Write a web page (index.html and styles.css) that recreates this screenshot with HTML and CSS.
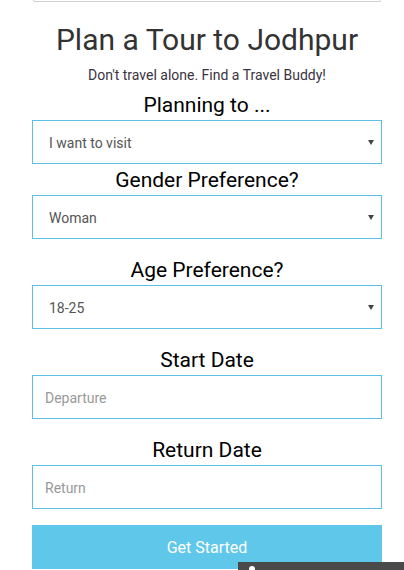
FILE: index.html
```html
<!DOCTYPE html>
<html lang="en">
<head>
<meta charset="utf-8">
<title>Plan a Tour to Jodhpur</title>
<link rel="stylesheet" href="styles.css">
</head>
<body>
<div class="page">
  <div class="prev-card"></div>
  <h1 class="title">Plan a Tour to Jodhpur</h1>
  <p class="subtitle">Don't travel alone. Find a Travel Buddy!</p>
  <form class="form">
    <label class="label">Planning to ...</label>
    <select class="field select field-first">
      <option>I want to visit</option>
    </select>
    <label class="label">Gender Preference?</label>
    <select class="field select">
      <option>Woman</option>
    </select>
    <label class="label">Age Preference?</label>
    <select class="field select">
      <option>18-25</option>
    </select>
    <label class="label">Start Date</label>
    <input class="field" type="text" placeholder="Departure">
    <label class="label">Return Date</label>
    <input class="field field-last" type="text" placeholder="Return">
    <button class="btn" type="button">Get Started</button>
  </form>
</div>
<div class="toast"><span class="toast-dot"></span></div>
</body>
</html>
```

FILE: styles.css
```css
html, body {
  margin: 0;
  padding: 0;
  background: #fff;
  overflow: hidden;
}
body {
  font-family: Roboto, "Liberation Sans", sans-serif;
  color: #333;
}
.page {
  width: 350px;
  padding: 0 22px 0 32px;
}
.prev-card {
  height: 1px;
  margin: 0 1px;
  border: 1px solid #cfcfcf;
  border-top: none;
  border-radius: 0 0 4px 4px;
}
.title {
  margin: 20px 0 0;
  font-size: 30px;
  line-height: 36px;
  font-weight: 400;
  text-align: center;
  color: #333;
}
.subtitle {
  margin: 7px 0 0;
  font-size: 14px;
  line-height: 20px;
  text-align: center;
  color: #3a3340;
}
.form {
  display: flex;
  flex-direction: column;
  margin-top: 4px;
}
.label {
  display: block;
  padding-top: 5px;
  margin-bottom: 4px;
  font-size: 21px;
  line-height: 22px;
  text-align: center;
  color: #000;
}
.field {
  box-sizing: border-box;
  width: 350px;
  height: 44px;
  margin: 0 0 15px;
  padding: 2px 12px 0;
  border: 1px solid #5bc0e4;
  border-radius: 0;
  background: #fff;
  font-family: Roboto, "Liberation Sans", sans-serif;
  font-size: 14px;
  color: #555;
  outline: none;
}
.select {
  -webkit-appearance: none;
  appearance: none;
  padding: 2px 16px 0;
  background: #fff url("data:image/svg+xml,%3Csvg xmlns='http://www.w3.org/2000/svg' width='6' height='5' viewBox='0 0 6 5'%3E%3Cpath d='M0 0H6L3 5Z' fill='%23444'/%3E%3C/svg%3E") no-repeat right 7px center;
  background-size: 6px 5px;
}
.field::placeholder {
  color: #999;
}
.field-first {
  margin-bottom: 0;
}
.field-last {
  margin-bottom: 16px;
}
.btn {
  box-sizing: border-box;
  width: 350px;
  height: 44px;
  border: none;
  border-radius: 0;
  background: #5fc8ea;
  color: #fff;
  font-family: Roboto, "Liberation Sans", sans-serif;
  font-size: 16px;
  padding: 0;
}
.toast {
  position: fixed;
  left: 238px;
  top: 562px;
  width: 166px;
  height: 40px;
  background: #4a4a4a;
}
.toast-dot {
  position: absolute;
  left: 11px;
  top: 4px;
  width: 6px;
  height: 6px;
  border-radius: 50%;
  background: #fff;
}
```
